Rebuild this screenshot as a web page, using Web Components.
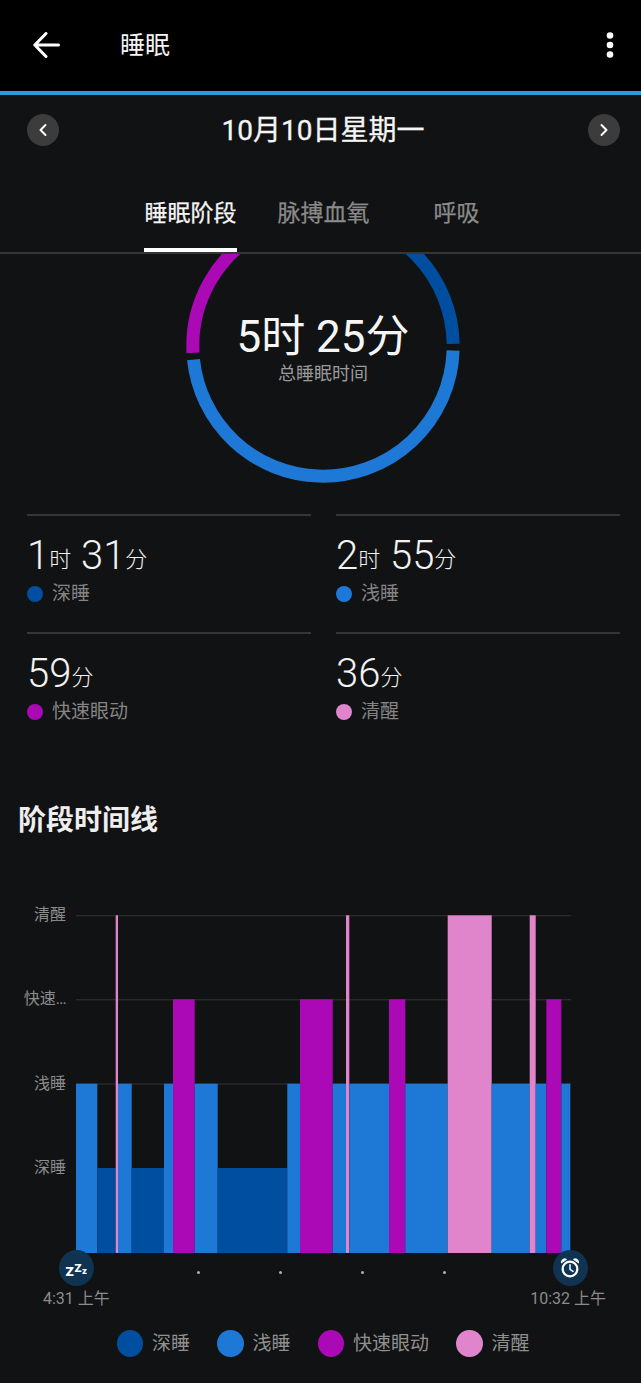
<!DOCTYPE html>
<html lang="zh">
<head>
<meta charset="utf-8">
<title>睡眠</title>
<style>
  html, body { margin: 0; background: #111213; }
  body { width: 641px; height: 1383px; overflow: hidden; font-family: Roboto, "Noto Sans CJK SC", sans-serif; color: #fff; }
</style>
</head>
<body>
<app-bar title="睡眠"></app-bar>
<date-nav>10月10日星期一</date-nav>
<tab-strip></tab-strip>
<sleep-ring></sleep-ring>
<stat-grid>
  <stat-tile hours="1" mins="31" color="#004ea0">深睡</stat-tile>
  <stat-tile hours="2" mins="55" color="#1e78d6">浅睡</stat-tile>
  <stat-tile mins="59" color="#ab08b6">快速眼动</stat-tile>
  <stat-tile mins="36" color="#e085cb">清醒</stat-tile>
</stat-grid>
<stage-chart></stage-chart>
<chart-legend></chart-legend>

<script>
// AppBar.js
class AppBar extends HTMLElement {
  constructor() {
    super();
    this.attachShadow({ mode: 'open' });
  }

  connectedCallback() {
    this.shadowRoot.innerHTML = `
      <style>
        :host {
          display: flex;
          align-items: center;
          height: 91px;
          background: #000;
          border-bottom: 4px solid #2a9ad8;
          padding: 0 27px 0 33px;
        }
        svg { display: block; margin-top: -1px; }
        .title { font-size: 25px; line-height: 30px; margin-left: 60px; flex: 1; color: #f4f4f4; margin-top: 1px; }
      </style>
      <svg width="27" height="26" viewBox="0 0 27 26" fill="none" stroke="#fff" stroke-width="3" stroke-linecap="round" stroke-linejoin="round">
        <path d="M13 1.5 1.8 13 13 24.5M2 13h23.5"/>
      </svg>
      <span class="title">${this.getAttribute('title')}</span>
      <svg width="8" height="28" viewBox="0 0 8 28" fill="#fff">
        <circle cx="4" cy="4.500" r="3.300"/><circle cx="4" cy="14" r="3.300"/><circle cx="4" cy="23.500" r="3.300"/>
      </svg>`;
  }
}
customElements.define('app-bar', AppBar);

// DateNav.js
class DateNav extends HTMLElement {
  constructor() {
    super();
    this.attachShadow({ mode: 'open' });
    this.shadowRoot.innerHTML = `
      <style>
        :host {
          display: flex;
          align-items: center;
          justify-content: space-between;
          height: 70px;
          padding: 0 21px 0 27px;
        }
        .btn {
          width: 32px;
          height: 32px;
          border-radius: 50%;
          background: #3c3c3c;
          display: flex;
          align-items: center;
          justify-content: center;
        }
        .label {
          font-size: 28px;
          line-height: 34px;
          font-weight: 400;
          -webkit-text-stroke: 0.3px #f5f5f5;
          color: #f5f5f5;
          margin: 2px 0 0 -1px;
        }
        svg { display: block; }
      </style>
      <div class="btn">
        <svg width="10" height="14" viewBox="0 0 10 14" fill="none" stroke="#fff" stroke-width="2" stroke-linecap="round" stroke-linejoin="round"><path d="M7.500 2 2.500 7l5 5"/></svg>
      </div>
      <span class="label"><slot></slot></span>
      <div class="btn">
        <svg width="10" height="14" viewBox="0 0 10 14" fill="none" stroke="#fff" stroke-width="2" stroke-linecap="round" stroke-linejoin="round"><path d="M2.500 2l5 5-5 5"/></svg>
      </div>`;
  }
}
customElements.define('date-nav', DateNav);

// TabStrip.js
class TabStrip extends HTMLElement {
  constructor() {
    super();
    this.attachShadow({ mode: 'open' });
    this.shadowRoot.innerHTML = `
      <style>
        :host {
          display: grid;
          grid-template-columns: repeat(3, 133px);
          justify-content: start;
          padding-left: 124px;
          height: 87px;
          border-bottom: 2px solid #363636;
        }
        .tab {
          justify-self: center;
          height: 83px;
          font-size: 23px;
          line-height: 98px;
          font-weight: 400;
          -webkit-text-stroke: 0.25px currentColor;
          color: #8a8a8a;
        }
        .active { color: #f5f5f5; border-bottom: 4px solid #fff; padding: 0 0.5px; }
      </style>
      <div class="tab active">睡眠阶段</div>
      <div class="tab">脉搏血氧</div>
      <div class="tab">呼吸</div>`;
  }
}
customElements.define('tab-strip', TabStrip);

// SleepRing.js
class SleepRing extends HTMLElement {
  constructor() {
    super();
    this.attachShadow({ mode: 'open' });
  }

  // clockwise degrees from 3 o'clock
  arc(from, to, color) {
    return `<circle cx="150" cy="150" r="130.2" fill="none" stroke="${color}" stroke-width="13"
      pathLength="360" stroke-dasharray="${to - from} ${360 - (to - from)}"
      transform="rotate(${from} 150 150)"/>`;
  }

  connectedCallback() {
    this.shadowRoot.innerHTML = `
      <style>
        :host { display: block; height: 242px; overflow: hidden; }
        .wrap { position: relative; width: 300px; height: 300px; margin: -58px 0 0 173px; }
        svg { display: block; }
        .center {
          position: absolute;
          left: 0;
          right: 0;
          top: 114px;
          text-align: center;
        }
        .total { font-size: 44px; line-height: 54px; color: #f5f5f5; font-weight: 400; }
        .sub { font-size: 18px; line-height: 22px; color: #9a9a9a; margin-top: -1px; }
      </style>
      <div class="wrap">
        <svg width="300" height="300" viewBox="0 0 300 300">
          ${this.arc(-88, -1, '#004ea0')}
          ${this.arc(2, 174, '#1e78d6')}
          ${this.arc(177, 242, '#ab08b6')}
        </svg>
        <div class="center">
          <div class="total">5时 25分</div>
          <div class="sub">总睡眠时间</div>
        </div>
      </div>`;
  }
}
customElements.define('sleep-ring', SleepRing);

// StatGrid.js
class StatGrid extends HTMLElement {
  constructor() {
    super();
    this.attachShadow({ mode: 'open' });
    this.shadowRoot.innerHTML = `
      <style>
        :host {
          display: grid;
          grid-template-columns: 284px 284px;
          column-gap: 25px;
          padding: 18px 0 0 27px;
        }
      </style>
      <slot></slot>`;
  }
}
customElements.define('stat-grid', StatGrid);

// StatTile.js
class StatTile extends HTMLElement {
  constructor() {
    super();
    this.attachShadow({ mode: 'open' });
  }

  connectedCallback() {
    const hours = this.getAttribute('hours');
    const mins = this.getAttribute('mins');
    this.shadowRoot.innerHTML = `
      <style>
        :host {
          display: block;
          height: 116px;
          border-top: 2px solid #363636;
          color: #f2f2f2;
        }
        .value { font-size: 40px; height: 48px; line-height: 48px; font-weight: 300; margin-top: 16px; white-space: nowrap; }
        .unit { font-size: 22px; font-weight: 300; vertical-align: 2px; }
        .label {
          display: flex;
          align-items: center;
          gap: 9px;
          font-size: 19px;
          line-height: 28px;
          color: #858585;
        }
        .dot { width: 16px; height: 16px; border-radius: 50%; background: ${this.getAttribute('color')}; }
      </style>
      <div class="value">${hours ? `${hours}<span class="unit">时</span> ` : ''}${mins}<span class="unit">分</span></div>
      <div class="label"><span class="dot"></span><span><slot></slot></span></div>`;
  }
}
customElements.define('stat-tile', StatTile);

// StageChart.js
const STAGE = {
  deep: { top: 1168, color: '#004ea0' },
  light: { top: 1083.7, color: '#1e78d6' },
  rem: { top: 999.3, color: '#ab08b6' },
  awake: { top: 915.3, color: '#e085cb' }
};

const SEGMENTS = [
  ['light', 76, 97.3], ['deep', 97.3, 115.7], ['awake', 115.7, 118], ['light', 118, 131.7],
  ['deep', 131.7, 164], ['light', 164, 173], ['rem', 173, 194.7], ['light', 194.7, 217.7],
  ['deep', 217.7, 287.3], ['light', 287.3, 300], ['rem', 300, 332.7], ['light', 332.7, 346],
  ['awake', 346, 349.3], ['light', 349.3, 389], ['rem', 389, 405.3], ['light', 405.3, 447.7],
  ['awake', 447.7, 491.7], ['light', 491.7, 529.7], ['awake', 529.7, 535.7], ['light', 535.7, 546.3],
  ['rem', 546.3, 561.3], ['light', 561.3, 570.3]
];

class StageChart extends HTMLElement {
  constructor() {
    super();
    this.attachShadow({ mode: 'open' });
  }

  connectedCallback() {
    const top = 915;
    const bars = SEGMENTS.map(([stage, x1, x2]) => {
      const s = STAGE[stage];
      return `<rect x="${x1 - 76}" y="${s.top - top}" width="${x2 - x1}" height="${1253 - s.top}" fill="${s.color}"/>`;
    }).join('');
    const grid = [0.5, 84.5, 168.8].map(y => `<rect x="0" y="${y - 0.5}" width="495" height="1.4" fill="#2a2a2a"/>`).join('');

    this.shadowRoot.innerHTML = `
      <style>
        :host { display: block; }
        h2 {
          margin: 0;
          padding: 53px 0 0 18px;
          font-size: 28px;
          line-height: 36px;
          font-weight: 700;
          color: #eeeeee;
        }
        .plot {
          display: grid;
          grid-template-columns: 76px 495px;
          margin-top: 34px;
        }
        .labels { display: grid; grid-template-rows: repeat(4, 84.3px); }
        .labels span {
          align-self: center;
          text-align: right;
          padding-right: 10px;
          font-size: 16px;
          line-height: 20px;
          color: #8c8c8c;
          white-space: nowrap;
        }
        .labels i { font-style: normal; letter-spacing: -0.8px; }
        svg { display: block; }
        .bars { margin-top: 42px; }
        .axis {
          display: flex;
          margin: -3px 0 0 58.5px;
          height: 36px;
        }
        .badge {
          flex: none;
          width: 35px;
          height: 36px;
          border-radius: 50%;
          background: #0f3350;
          display: flex;
          align-items: center;
          justify-content: center;
        }
        .tick { flex: none; width: 3px; height: 3px; border-radius: 50%; background: #b0b0b0; margin: 21px 0 0 79px; }
        .tick.first { margin-left: 103px; }
        .tick.last { margin-right: 107px; }
        .times {
          display: flex;
          justify-content: space-between;
          width: 563px;
          margin: 1px 0 0 43px;
          font-size: 16px;
          line-height: 24px;
          color: #8c8c8c;
        }
      </style>
      <h2>阶段时间线</h2>
      <div class="plot">
        <div class="labels"><span>清醒</span><span>快速<i>...</i></span><span>浅睡</span><span>深睡</span></div>
        <svg class="bars" width="495" height="338" viewBox="0 0 495 338">${grid}${bars}</svg>
      </div>
      <div class="axis">
        <div class="badge">
          <svg width="24" height="26" viewBox="0 -4 24 26" font-family="Roboto, sans-serif" font-weight="900" fill="#fff">
            <text x="1.500" y="16.500" font-size="13.500">Z</text>
            <text x="10.500" y="12.500" font-size="11.500">Z</text>
            <text x="18" y="14.500" font-size="9.500">z</text>
          </svg>
        </div>
        <span class="tick first"></span><span class="tick"></span><span class="tick"></span><span class="tick last"></span>
        <div class="badge">
          <svg width="22" height="24" viewBox="0 0 22 24" fill="none" stroke="#fff" stroke-linecap="round" stroke-linejoin="round">
            <circle cx="11" cy="13" r="7.300" stroke-width="2.200"/>
            <path d="M11 8.800v4.600l3 2" stroke-width="1.500"/>
            <path d="M2.400 6.600C2.200 3.800 4.800 2 7.200 3.200ZM19.600 6.600c.2-2.800-2.400-4.600-4.800-3.400Z" fill="#fff" stroke-width="1"/>
          </svg>
        </div>
      </div>
      <div class="times"><span>4:31 上午</span><span>10:32 上午</span></div>`;
  }
}
customElements.define('stage-chart', StageChart);

// ChartLegend.js
class ChartLegend extends HTMLElement {
  constructor() {
    super();
    this.attachShadow({ mode: 'open' });
  }

  connectedCallback() {
    const items = [['深睡', '#004ea0'], ['浅睡', '#1e78d6'], ['快速眼动', '#ab08b6'], ['清醒', '#e085cb']];
    this.shadowRoot.innerHTML = `
      <style>
        :host {
          display: flex;
          gap: 27px;
          padding: 19px 0 0 116.500px;
          font-size: 19px;
          color: #909090;
        }
        .item { display: flex; align-items: center; gap: 9px; line-height: 27px; }
        .swatch { width: 26.500px; height: 27px; border-radius: 50%; }
      </style>
      ${items.map(([name, color]) => `<div class="item"><span class="swatch" style="background:${color}"></span><span>${name}</span></div>`).join('')}`;
  }
}
customElements.define('chart-legend', ChartLegend);
</script>
</body>
</html>
